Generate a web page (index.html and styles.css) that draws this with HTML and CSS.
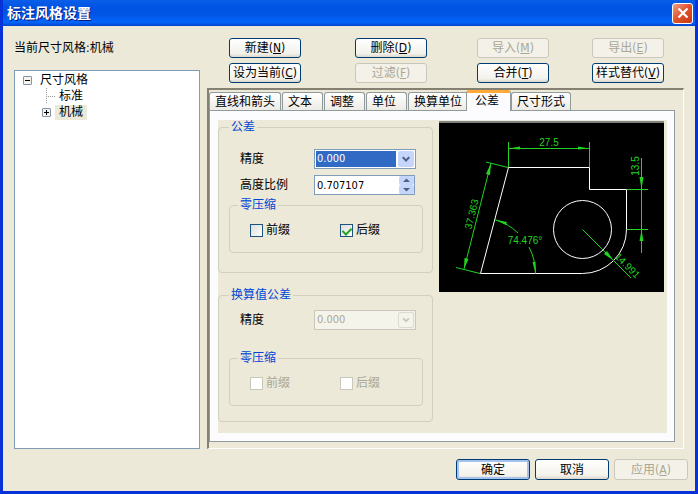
FILE: index.html
```
<!DOCTYPE html>
<html lang="zh-CN">
<head>
    <meta charset="UTF-8">
    <meta name="viewport" content="width=device-width, initial-scale=1.0">
    <title>标注风格设置</title>
    <link rel="stylesheet" href="styles.css">
</head>
<body>
    <div class="titlebar">
        <h1>标注风格设置</h1>
        <button type="button" class="close" aria-label="关闭">
            <svg width="12" height="12" viewBox="0 0 12 12"><path d="M1.5 1.5L10.5 10.5M10.5 1.5L1.5 10.5" stroke="#fff" stroke-width="2.2"/></svg>
        </button>
    </div>

    <div class="content">
        <div class="left">
            <div class="current">当前尺寸风格:机械</div>
            <div class="tree">
                <ul>
                    <li>
                        <button type="button" class="toggle" aria-label="折叠"><svg width="9" height="9" viewBox="0 0 9 9"><path d="M2 4.5H7" stroke="#000"/></svg></button>
                        <span>尺寸风格</span>
                    </li>
                </ul>
                <ul class="children">
                    <li class="leaf"><span>标准</span></li>
                    <li>
                        <button type="button" class="toggle" aria-label="展开"><svg width="9" height="9" viewBox="0 0 9 9"><path d="M2 4.5H7M4.5 2V7" stroke="#000"/></svg></button>
                        <span class="selected">机械</span>
                    </li>
                </ul>
            </div>
        </div>

        <div class="right">
            <div class="actions">
                <button type="button" class="btn">新建(<u>N</u>)</button>
                <button type="button" class="btn">删除(<u>D</u>)</button>
                <button type="button" class="btn" disabled>导入(<u>M</u>)</button>
                <button type="button" class="btn" disabled>导出(<u>E</u>)</button>
                <button type="button" class="btn">设为当前(<u>C</u>)</button>
                <button type="button" class="btn" disabled>过滤(<u>F</u>)</button>
                <button type="button" class="btn">合并(<u>T</u>)</button>
                <button type="button" class="btn">样式替代(<u>V</u>)</button>
            </div>

            <div class="frame">
                <div class="tabs">
                    <button type="button" class="tab">直线和箭头</button>
                    <button type="button" class="tab">文本</button>
                    <button type="button" class="tab">调整</button>
                    <button type="button" class="tab">单位</button>
                    <button type="button" class="tab">换算单位</button>
                    <button type="button" class="tab active">公差</button>
                    <button type="button" class="tab">尺寸形式</button>
                </div>
                <div class="pane">
                    <div class="page">
                        <div class="options">
                            <fieldset class="group main">
                                <legend>公差</legend>
                                <div class="row">
                                    <label for="precision">精度</label>
                                    <span class="field">
                                        <select id="precision" class="focused"><option>0.000</option></select>
                                        <svg class="drop" width="17" height="17" viewBox="0 0 17 17"><path d="M5 6.5L8.5 10L12 6.5" fill="none" stroke="#4d6185" stroke-width="2.2"/></svg>
                                    </span>
                                </div>
                                <div class="row">
                                    <label for="ratio">高度比例</label>
                                    <span class="field spinner">
                                        <input type="text" id="ratio" value="0.707107">
                                        <span class="spin">
                                            <button type="button" aria-label="增加"><svg width="15" height="9" viewBox="0 0 15 9"><path d="M4 6L7.5 2.5L11 6Z" fill="#4d6185"/></svg></button>
                                            <button type="button" aria-label="减少"><svg width="15" height="9" viewBox="0 0 15 9"><path d="M4 3L7.5 6.5L11 3Z" fill="#4d6185"/></svg></button>
                                        </span>
                                    </span>
                                </div>
                                <fieldset class="group sub">
                                    <legend>零压缩</legend>
                                    <div class="checks">
                                        <label><input type="checkbox">前缀</label>
                                        <label><input type="checkbox" checked>后缀</label>
                                    </div>
                                </fieldset>
                            </fieldset>

                            <fieldset class="group alt">
                                <legend>换算值公差</legend>
                                <div class="row">
                                    <label for="altPrecision">精度</label>
                                    <span class="field">
                                        <select id="altPrecision" disabled><option>0.000</option></select>
                                        <svg class="drop off" width="17" height="17" viewBox="0 0 17 17"><path d="M5 6.5L8.5 10L12 6.5" fill="none" stroke="#c9c7ba" stroke-width="2.2"/></svg>
                                    </span>
                                </div>
                                <fieldset class="group sub" disabled>
                                    <legend>零压缩</legend>
                                    <div class="checks">
                                        <label><input type="checkbox">前缀</label>
                                        <label><input type="checkbox">后缀</label>
                                    </div>
                                </fieldset>
                            </fieldset>
                        </div>

                        <!-- Dimension preview -->
                        <svg class="preview" viewBox="0 0 225 171">
                            <rect width="225" height="171" fill="#000"/>
                            <path d="M0 1H225" stroke="#808080" stroke-width="2"/>
                            <g fill="none" stroke="#fff">
                                <path d="M69.5 46.5H150.5V68.5H187.5V108.5A44 44 0 0 1 143.5 152.5H41.5Z"/>
                                <circle cx="143.5" cy="108.5" r="29"/>
                            </g>
                            <g fill="none" stroke="#22d422">
                                <path d="M69.5 21V46M150.5 21V46M69.5 27.5H150.5"/>
                                <path d="M202.5 37V132M188 68.5H209M188 108.5H209"/>
                                <path d="M47 41L69 46.5M17 146.5L41 152.5M52 42L25 148"/>
                                <path d="M55.5 98.5A56 56 0 0 1 79 112M90 126A56 56 0 0 1 96.5 152.5"/>
                                <path d="M143.5 108.5L192 157"/>
                            </g>
                            <g fill="#22d422">
                                <path d="M69.5 27.5L81 25.5V28.5ZM150.5 27.5L139 25.5V28.5Z"/>
                                <path d="M202.5 68L200.5 56H204.5ZM202.5 109L200.5 120H204.5Z"/>
                                <path d="M52 42L51 54L47 53ZM25 148L29.5 138L25.5 137Z"/>
                                <path d="M55.5 98.5L68 101L67 104ZM96.5 152.5L93.5 141H96.5Z"/>
                                <path d="M174.5 139.5L165 133L168 130Z"/>
                            </g>
                            <g class="dims" fill="#22d422" text-anchor="middle">
                                <text x="110" y="25">27.5</text>
                                <text transform="translate(200 45) rotate(-90)">13.5</text>
                                <text transform="translate(36 94) rotate(-76)">37.363</text>
                                <text x="86" y="123">74.476°</text>
                                <text transform="translate(186 147) rotate(45)">14.991</text>
                            </g>
                        </svg>
                    </div>
                </div>
            </div>
        </div>
    </div>

    <div class="footer">
        <button type="button" class="btn default">确定</button>
        <button type="button" class="btn">取消</button>
        <button type="button" class="btn" disabled>应用(<u>A</u>)</button>
    </div>
</body>
</html>
```
FILE: styles.css
```
* {
    box-sizing: border-box;
}
body {
    display: flex;
    flex-direction: column;
    min-height: 100vh;
    margin: 0;
    border: 3px solid #0831d9;
    border-top: none;
    background-color: #ece9d8;
    color: #000;
    font-family: "DejaVu Sans Condensed", "Noto Sans CJK SC", sans-serif;
    font-size: 12px;
    line-height: 16px;
}
button, input, select {
    margin: 0;
    padding: 0;
    font: inherit;
    color: inherit;
}
ul {
    margin: 0;
    padding: 0;
    list-style: none;
}
svg {
    display: block;
}
.titlebar {
    display: flex;
    align-items: center;
    justify-content: space-between;
    height: 26px;
    margin: 0 -3px;
    padding: 0 5px 0 7px;
    background: linear-gradient(#0a5fe8, #0054e3 25%, #0055e5 55%, #0366fb 85%, #0443cd);
}
h1 {
    margin: 0;
    color: #fff;
    font-size: 14px;
    line-height: 20px;
    text-shadow: 1px 1px #0a1883;
}
.close {
    display: flex;
    align-items: center;
    justify-content: center;
    width: 21px;
    height: 21px;
    border: 1px solid #fff;
    border-radius: 3px;
    background: linear-gradient(135deg, #f0a088, #e0502a 50%, #c43a16);
}
.content {
    display: flex;
    flex: 1;
    gap: 7px;
    padding: 12px 11px 0;
}
.left {
    display: flex;
    flex-direction: column;
    width: 186px;
}
.current {
    padding: 2px 0 14px;
}
.tree {
    flex: 1;
    padding: 1px 8px;
    border: 1px solid #7f9db9;
    background-color: #fff;
}
.tree li {
    display: flex;
    align-items: center;
    gap: 4px;
    height: 16px;
}
.tree span {
    padding: 0 4px;
    line-height: 15px;
}
.tree .selected {
    background-color: #ece9d8;
}
.toggle {
    width: 9px;
    height: 9px;
    border: 1px solid #8293a8;
    border-radius: 1px;
    background-color: #f4f3ee;
}
.toggle svg {
    margin: -1px;
}
.children {
    margin-left: 19px;
}
.children .leaf {
    gap: 0;
}
.leaf::before {
    content: "";
    width: 9px;
    height: 16px;
    margin: 0 0 0 4px;
    background:
        repeating-linear-gradient(#999 0 1px, #fff 1px 2px) left / 1px 100% no-repeat,
        repeating-linear-gradient(90deg, #999 0 1px, #fff 1px 2px) left center / 100% 1px no-repeat;
}
.right {
    display: flex;
    flex: 1;
    flex-direction: column;
}
.actions {
    display: grid;
    grid-template-columns: 126fr 122fr 115fr 72px;
    row-gap: 5px;
    padding: 0 20px 5px 22px;
}
.btn {
    width: 72px;
    height: 20px;
    border: 1px solid #003c74;
    border-radius: 3px;
    background: linear-gradient(#fff, #f3f2ec 80%, #dcd8cc);
    line-height: 16px;
    white-space: nowrap;
}
.btn:disabled {
    border-color: #cac8bb;
    background: #f3f1e8;
    color: #a9a796;
}
.default {
    box-shadow: inset 0 0 0 2px #a6c3f0;
}
.frame {
    display: flex;
    flex: 1;
    flex-direction: column;
    padding: 2px 8px 6px 0;
    border: 1px solid #fff;
    border-top: 2px solid #848173;
    border-left: 2px solid #848173;
}
.tabs {
    display: flex;
    align-items: flex-end;
    gap: 1px;
}
.tab {
    min-width: 41px;
    height: 18px;
    padding: 0 5px;
    border: 1px solid #919b9c;
    border-bottom: none;
    border-radius: 3px 3px 0 0;
    background: linear-gradient(#fff, #ecebe5);
    line-height: 16px;
    text-align: left;
    white-space: nowrap;
}
.tab.active {
    height: 21px;
    margin: -2px -1px -1px -3px;
    padding: 0 11px 2px 8px;
    border-top: 3px solid #ffa93a;
    background: #fcfcfe;
    z-index: 1;
}
.pane {
    display: flex;
    flex: 1;
    padding: 9px 7px 8px 8px;
    border: 1px solid #919b9c;
    background-color: #fcfcfe;
}
.page {
    display: flex;
    flex: 1;
    align-items: flex-start;
    gap: 6px;
    padding-right: 3px;
    background-color: #ece9d8;
}
.options {
    width: 215px;
}
.group {
    min-width: 0;
    margin: 0;
    border: 1px solid #d0d0bf;
    border-radius: 4px;
}
legend {
    padding: 0 2px;
    color: #0046d5;
    line-height: 14px;
}
.main, .alt {
    padding: 0 9px 19px 10px;
}
.main {
    margin-bottom: 15px;
}
.main .row {
    margin: 0 0 6px;
}
.main legend + .row {
    margin-top: 15px;
}
.main .sub {
    margin-top: -3px;
}
.alt .row {
    margin: 8px 0 21px;
}
.alt .group {
    margin-bottom: -4px;
}
.sub {
    padding: 0 4px 0 8px;
}
.row {
    display: flex;
    align-items: center;
    justify-content: space-between;
    padding: 0 7px 0 11px;
}
.field {
    position: relative;
    width: 102px;
    height: 20px;
}
.field select, .field input {
    width: 100%;
    height: 20px;
    padding: 0 2px;
    border: 1px solid #7f9db9;
    border-radius: 0;
    background-color: #fff;
    appearance: none;
    font-size: 11px;
    outline: none;
}
.field select.focused {
    background: linear-gradient(#316ac5, #316ac5) 1px 1px / 80px 16px no-repeat #fff;
    color: #fff;
}
.field select:disabled {
    border-color: #c9c7ba;
    background-color: #f5f4ea;
    color: #a9a796;
    opacity: 1;
}
/* arrow sits over the select */
.drop {
    position: absolute;
    top: 2px;
    right: 2px;
    width: 16px;
    height: 16px;
    border-radius: 2px;
    background-color: #c6d5fb;
    pointer-events: none;
}
.drop.off {
    border: 1px solid #dddbd0;
    background-color: #f5f4ea;
}
.spinner {
    display: flex;
    padding-right: 1px;
}
.spin {
    display: flex;
    position: absolute;
    top: 1px;
    right: 2px;
    flex-direction: column;
}
.spin button {
    width: 15px;
    height: 9px;
    border: none;
    border-radius: 2px;
    background-color: #c6d5fb;
}
.checks {
    display: flex;
    padding: 10px 0 14px;
}
.checks label {
    display: flex;
    flex: 1;
    align-items: center;
    gap: 3px;
    padding-left: 12px;
}
.checks input {
    width: 13px;
    height: 13px;
    border: 1px solid #1c5180;
    background: linear-gradient(135deg, #dcdcd7, #fff);
    appearance: none;
}
.checks input:checked::after {
    content: "";
    display: block;
    width: 4px;
    height: 7px;
    margin: 1px 0 0 3px;
    border: solid #21a121;
    border-width: 0 2px 2px 0;
    transform: rotate(45deg);
}
.group:disabled .checks {
    color: #a9a796;
}
.group:disabled input {
    border-color: #cac8bb;
    background: #fff;
}
.preview {
    flex: 1;
    min-width: 0;
    margin-top: 1px;
}
.dims {
    font-family: "Liberation Sans", sans-serif;
    font-size: 10px;
}
.footer {
    display: flex;
    justify-content: flex-end;
    gap: 5px;
    padding: 10px 7px 11px;
}
.footer .btn {
    width: 74px;
    height: 21px;
}
```
